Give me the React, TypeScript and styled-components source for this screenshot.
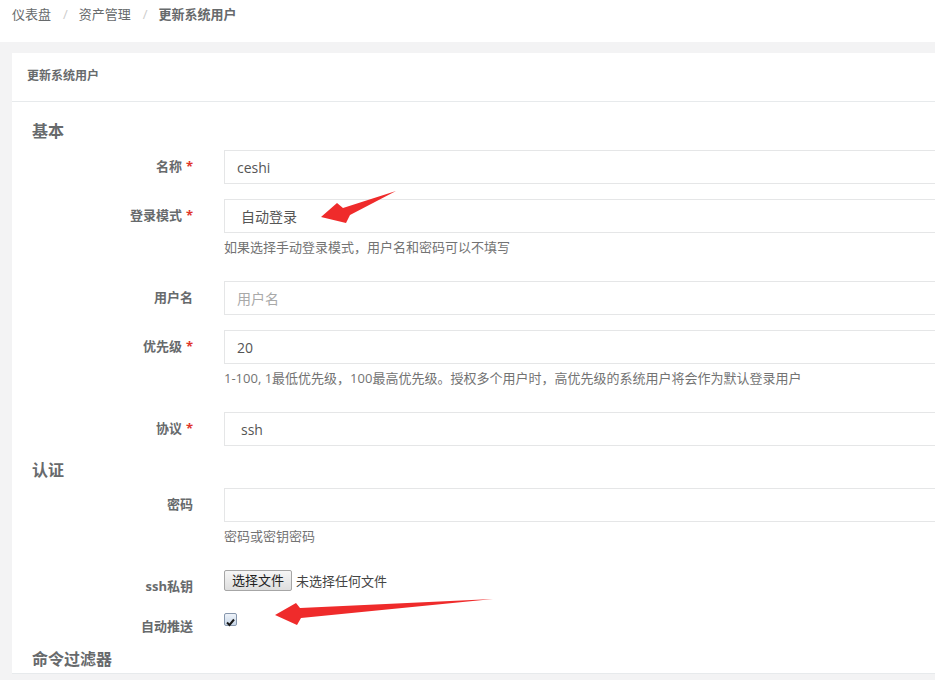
import React from "react";
import styled, { createGlobalStyle } from "styled-components";

const Global = createGlobalStyle`
  html, body { margin: 0; padding: 0; overflow: hidden; background: #f3f3f4; }
  body {
    font-family: "Open Sans", "Noto Sans CJK SC", sans-serif;
    font-size: 13px;
    color: #676a6c;
    width: 935px;
    height: 680px;
  }
  * { box-sizing: border-box; }
`;

const Page = styled.div`
  position: relative;
  width: 935px;
  height: 680px;
  overflow: hidden;
  background: #f3f3f4;
`;

const Breadcrumb = styled.div`
  height: 42px;
  background: #fff;
  padding: 5px 12px 0;
  display: flex;
  align-items: flex-start;
  line-height: 18px;
  font-size: 13px;
`;

const Crumb = styled.span<{ $active?: boolean }>`
  font-weight: ${(p) => (p.$active ? 700 : 400)};
  color: #676a6c;
`;

const Sep = styled.span`
  color: #ccc;
  padding: 0 11px 0 12px;
`;

const Wrapper = styled.div`
  padding: 11px 0 0 12px;
`;

const Panel = styled.div`
  width: 1156px;
  background: #fff;
`;

const PanelTitle = styled.div`
  height: 49px;
  padding: 14px 15px 0;
  border-bottom: 1px solid #e7eaec;
  font-size: 12px;
  font-weight: 700;
  line-height: 18px;
  color: #676a6c;
`;

const PanelBody = styled.div`
  padding: 20px 20px 0;
  height: 572px;
  border-bottom: 1px solid #e7eaec;
`;

const SectionTitle = styled.h3<{ $mb?: number }>`
  margin: 0 0 ${(p) => p.$mb ?? 10}px;
  font-size: 16px;
  line-height: 18px;
  font-weight: 600;
  color: #676a6c;
`;

const FormRow = styled.div`
  display: grid;
  grid-template-columns: 176px 756px;
  margin-bottom: 15px;
`;

const Label = styled.label`
  text-align: right;
  padding: 7px 15px 0 0;
  font-weight: 700;
  font-size: 13px;
  line-height: 18px;
  color: #676a6c;
`;

const Req = styled.span`
  color: #e0362b;
  margin-left: 4px;
  font-weight: 700;
`;

const Field = styled.div`
  padding-left: 16px;
`;

const Input = styled.div<{ $select?: boolean; $placeholder?: boolean }>`
  height: 34px;
  width: 740px;
  border: 1px solid #e5e6e7;
  padding: 0 ${(p) => (p.$select ? 16 : 12)}px;
  display: flex;
  align-items: center;
  font-size: 14px;
  color: ${(p) => (p.$placeholder ? "#a9a9a9" : "#555")};
`;

const Help = styled.div`
  margin: 5px 0 10px;
  font-size: 13px;
  line-height: 18px;
  color: #737373;
`;

const FileRow = styled.div`
  display: flex;
  align-items: center;
  gap: 4px;
  height: 21px;
`;

const FileButton = styled.span`
  width: 68px;
  height: 21px;
  border: 1px solid #a6a6a6;
  border-radius: 2px;
  background: linear-gradient(#f6f6f6, #dedede);
  font-size: 13px;
  line-height: 19px;
  text-align: center;
  color: #222;
`;

const FileText = styled.span`
  font-size: 13px;
  color: #444;
`;

const CheckBox = styled.span`
  display: block;
  margin-top: 3px;
  width: 13px;
  height: 13px;
  border: 1px solid #8797ad;
  border-radius: 2px;
  background: linear-gradient(#eef3f9, #c9d7e8);
`;

const Overlay = styled.svg`
  position: absolute;
  left: 0;
  top: 0;
  pointer-events: none;
`;

export default function App() {
  return (
    <Page>
      <Global />
      <Breadcrumb>
        <Crumb>仪表盘</Crumb>
        <Sep>/</Sep>
        <Crumb>资产管理</Crumb>
        <Sep>/</Sep>
        <Crumb $active>更新系统用户</Crumb>
      </Breadcrumb>
      <Wrapper>
        <Panel>
          <PanelTitle>更新系统用户</PanelTitle>
          <PanelBody>
            <SectionTitle>基本</SectionTitle>
            <FormRow>
              <Label>
                名称<Req>*</Req>
              </Label>
              <Field>
                <Input>ceshi</Input>
              </Field>
            </FormRow>
            <FormRow>
              <Label>
                登录模式<Req>*</Req>
              </Label>
              <Field>
                <Input $select>自动登录</Input>
                <Help>如果选择手动登录模式，用户名和密码可以不填写</Help>
              </Field>
            </FormRow>
            <FormRow>
              <Label>用户名</Label>
              <Field>
                <Input $placeholder>用户名</Input>
              </Field>
            </FormRow>
            <FormRow>
              <Label>
                优先级<Req>*</Req>
              </Label>
              <Field>
                <Input>20</Input>
                <Help>1-100, 1最低优先级，100最高优先级。授权多个用户时，高优先级的系统用户将会作为默认登录用户</Help>
              </Field>
            </FormRow>
            <FormRow>
              <Label>
                协议<Req>*</Req>
              </Label>
              <Field>
                <Input $select>ssh</Input>
              </Field>
            </FormRow>
            <SectionTitle $mb={9}>认证</SectionTitle>
            <FormRow>
              <Label>密码</Label>
              <Field>
                <Input />
                <Help>密码或密钥密码</Help>
              </Field>
            </FormRow>
            <FormRow>
              <Label>ssh私钥</Label>
              <Field>
                <FileRow>
                  <FileButton>选择文件</FileButton>
                  <FileText>未选择任何文件</FileText>
                </FileRow>
              </Field>
            </FormRow>
            <FormRow>
              <Label>自动推送</Label>
              <Field>
                <CheckBox>
                  <svg width="11" height="11" viewBox="0 0 11 11">
                    <path d="M2 5.5 L4.5 8 L9 2.5" fill="none" stroke="#1a1a1a" strokeWidth="2" />
                  </svg>
                </CheckBox>
              </Field>
            </FormRow>
            <SectionTitle>命令过滤器</SectionTitle>
          </PanelBody>
        </Panel>
      </Wrapper>
      <Overlay width="935" height="680" viewBox="0 0 935 680">
        <polygon
          points="321,217 337,203 343,208 396,191 350,215 346,223"
          fill="#ef2b2b"
        />
        <polygon
          points="275,615 296,603 300,608 493,599 301,618 297,625"
          fill="#ef2b2b"
        />
      </Overlay>
    </Page>
  );
}
